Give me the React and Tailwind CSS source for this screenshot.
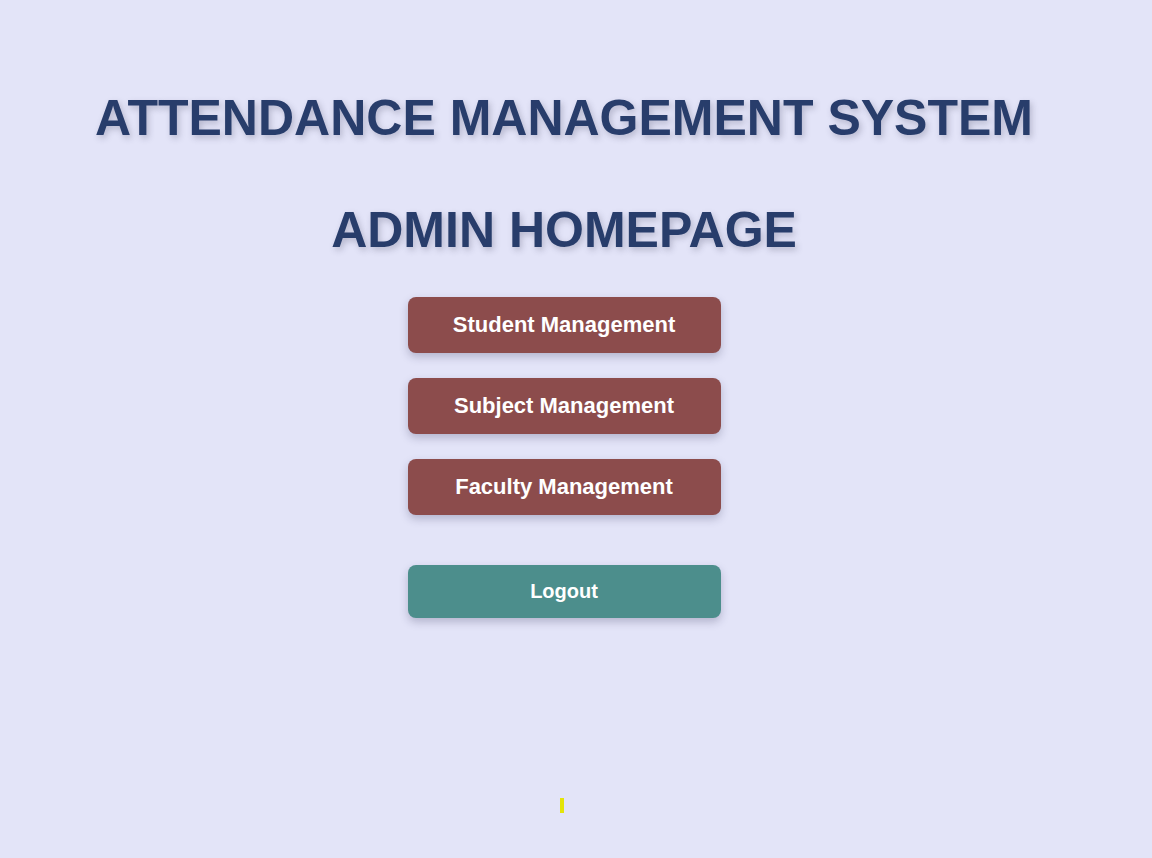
export default function App() {
  const font = { fontFamily: '"Liberation Sans", Arial, sans-serif' };
  const btn =
    "w-[313px] h-[56px] flex items-center justify-center pb-[2px] rounded-[8px] bg-[#8c4c4c] text-white text-[22px] font-bold shadow-[0_4px_8px_rgba(40,40,80,0.25)]";
  return (
    <div className="min-h-[858px] w-full bg-[#e3e4f8]" style={font}>
      <div className="w-[1128px] flex flex-col items-center pt-[89px]">
        <h1 className="text-[50px] leading-[58px] font-bold text-[#283d6b] [text-shadow:2px_3px_6px_rgba(60,60,90,0.28)]">
          ATTENDANCE MANAGEMENT SYSTEM
        </h1>
        <h2 className="mt-[54px] text-[50px] leading-[58px] font-bold text-[#283d6b] [text-shadow:2px_3px_6px_rgba(60,60,90,0.28)]">
          ADMIN HOMEPAGE
        </h2>
        <div className="mt-[38px] flex flex-col items-center gap-[25px]">
          <button className={btn}>Student Management</button>
          <button className={btn}>Subject Management</button>
          <button className={btn}>Faculty Management</button>
        </div>
        <button className="mt-[50px] w-[313px] h-[53px] flex items-center justify-center pb-[2px] rounded-[8px] bg-[#4c8e8c] text-white text-[20px] font-bold shadow-[0_4px_8px_rgba(40,40,80,0.25)]">
          Logout
        </button>
        <div className="w-full mt-[180px]">
          <div className="ml-[560px] w-[4px] h-[15px] bg-[#e4e40a]" />
        </div>
      </div>
    </div>
  );
}
